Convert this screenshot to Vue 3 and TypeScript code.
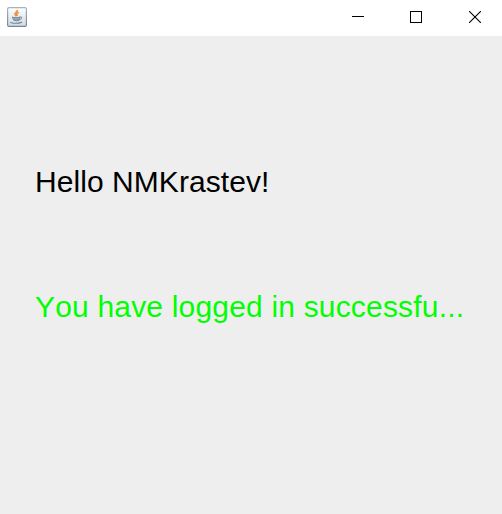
<script setup lang="ts">
const userName: string = 'NMKrastev'
</script>

<template>
  <div class="window">
    <header class="titlebar">
      <svg class="app-icon" width="20" height="20" viewBox="0 0 20 20">
        <defs>
          <linearGradient id="tile" x1="0" y1="0" x2="0" y2="1">
            <stop offset="0" stop-color="#ffffff" />
            <stop offset="1" stop-color="#d5d8dc" />
          </linearGradient>
          <linearGradient id="edge" x1="0" y1="0" x2="0" y2="1">
            <stop offset="0" stop-color="#a9b3bc" />
            <stop offset="1" stop-color="#70879b" />
          </linearGradient>
        </defs>
        <rect x="0.6" y="0.6" width="18.800" height="18.800" rx="1.500" fill="url(#tile)" stroke="url(#edge)" stroke-width="1.200" />
        <path d="M10.300 2.900C11 5.200 7 5.700 8 7.700L9.300 9.300M12 5.400C9 6.500 9.300 7.500 10.500 9" fill="none" stroke="#f08b3c" stroke-width="1.500" />
        <path d="M5.300 10C7 10.900 11 10.900 13 10L12.200 13.200Q9.500 14.300 6.700 13.200Z" fill="#8199ad" stroke="#5f7d96" stroke-width=".8" />
        <path d="M6.500 11.700Q9 12.500 12 11.600" fill="none" stroke="#b5c4d0" stroke-width=".7" />
        <path d="M13 10C15.900 9.400 15.200 12.200 12.500 12.700" fill="none" stroke="#6f899f" stroke-width="1" />
        <path d="M3.500 15C4.500 16.700 13 16.600 15 15" fill="none" stroke="#6688a3" stroke-width="1.200" />
      </svg>
      <div class="controls">
        <svg width="12" height="12" viewBox="0 0 12 12"><path d="M0 5.500h12" stroke="#000" /></svg>
        <svg width="12" height="12" viewBox="0 0 12 12"><rect x=".5" y=".5" width="11" height="11" fill="none" stroke="#000" /></svg>
        <svg class="close" width="12" height="12" viewBox="0 0 12 12"><path d="M0 0L12 12M12 0L0 12" stroke="#000" stroke-width="1.100" /></svg>
      </div>
    </header>
    <main class="content">
      <p class="label greeting">Hello {{ userName }}!</p>
      <p class="label success">You have logged in successfu...</p>
    </main>
  </div>
</template>

<style>
body { margin: 0; }
</style>

<style scoped>
.window { width: 502px; height: 514px; background: #eeeeee; overflow: hidden; font-family: "Liberation Sans", Arial, sans-serif; }
.titlebar { height: 36px; box-sizing: border-box; background: #fff; display: flex; justify-content: space-between; padding: 7px 21px 0 7px; }
.controls { display: flex; gap: 46px; padding-top: 4px; }
.close { margin-left: 1px; }
.content { padding: 128px 0 0 35px; }
.label { margin: 0; height: 36px; line-height: 36px; font-size: 30px; font-kerning: none; color: #000; white-space: nowrap; }
.greeting { letter-spacing: 0.06px; }
.success { margin-top: 89px; color: #00ff00; letter-spacing: 0.18px; }
</style>
